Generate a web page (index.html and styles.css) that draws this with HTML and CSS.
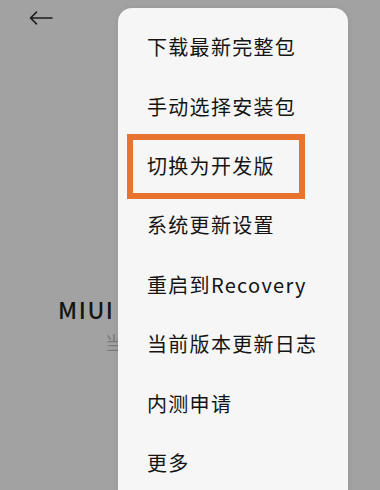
FILE: index.html
```html
<!DOCTYPE html>
<html lang="zh-CN">
<head>
<meta charset="utf-8">
<title>系统更新</title>
<link rel="stylesheet" href="styles.css">
</head>
<body>
<div class="screen">
  <header class="topbar">
    <svg class="back" width="24" height="14" viewBox="0 0 24 14" aria-label="返回">
      <path d="M1.5 7 H23 M7.5 1.2 L1.5 7 L7.5 12.8" fill="none" stroke="#1c1c1c" stroke-width="1.6" stroke-linecap="round" stroke-linejoin="round"/>
    </svg>
  </header>
  <main class="content">
    <div class="version">MIUI 14.0.5</div>
    <div class="sub">当前已是最新版本</div>
  </main>
  <ul class="menu">
    <li class="item">下载最新完整包</li>
    <li class="item">手动选择安装包</li>
    <li class="item highlight">切换为开发版</li>
    <li class="item">系统更新设置</li>
    <li class="item">重启到Recovery</li>
    <li class="item">当前版本更新日志</li>
    <li class="item">内测申请</li>
    <li class="item">更多</li>
  </ul>
</div>
</body>
</html>
```

FILE: styles.css
```css
html, body {
  margin: 0;
  padding: 0;
}
body {
  background: #a2a2a2;
  font-family: "Noto Sans CJK SC", "Noto Sans", sans-serif;
  width: 380px;
  height: 490px;
  overflow: hidden;
}
.screen {
  position: relative;
  width: 380px;
  height: 490px;
  overflow: hidden;
}
.topbar {
  display: flex;
  align-items: center;
  height: 36px;
  padding-left: 29px;
}
.back {
  display: block;
}
.content {
  width: 60px;
  margin-left: 58px;
  padding-top: 258px;
  overflow: hidden;
}
.version {
  font-size: 23px;
  font-weight: 500;
  line-height: 30px;
  color: #141414;
  letter-spacing: 1.6px;
  white-space: nowrap;
}
.sub {
  margin-top: 6px;
  padding-left: 47px;
  font-size: 18px;
  line-height: 24px;
  color: #7a7a7a;
  white-space: nowrap;
}
.menu {
  position: absolute;
  left: 118px;
  top: 8px;
  width: 230px;
  height: 520px;
  margin: 0;
  padding: 9px 0 0 0;
  list-style: none;
  background: #f6f6f6;
  border-radius: 14px;
  box-shadow: 0 0 6px rgba(0, 0, 0, 0.08);
}
.item {
  position: relative;
  display: flex;
  align-items: center;
  height: 59.4px;
  padding-left: 29px;
  font-size: 20px;
  letter-spacing: 1.3px;
  color: #141414;
  white-space: nowrap;
}
.highlight::after {
  content: "";
  position: absolute;
  left: 9px;
  top: -1.5px;
  width: 178px;
  height: 65px;
  box-sizing: border-box;
  border: 6px solid #e8732e;
}
```
